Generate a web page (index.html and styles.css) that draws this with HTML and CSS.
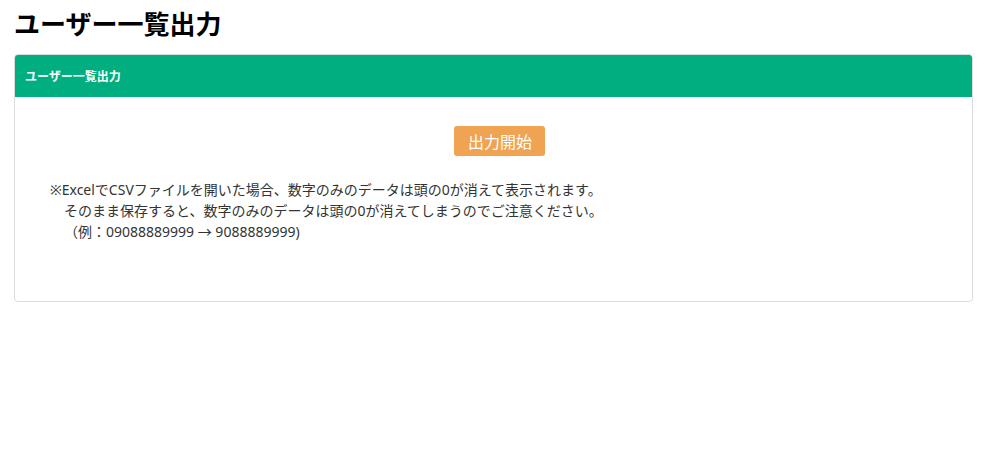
FILE: index.html
```html
<!DOCTYPE html>
<html lang="ja">
<head>
<meta charset="utf-8">
<link rel="stylesheet" href="styles.css">
</head>
<body>
<h1 class="page-title">ユーザー一覧出力</h1>
<div class="card">
  <div class="card-header">ユーザー一覧出力</div>
  <div class="card-body">
    <div class="actions"><button class="btn-export">出力開始</button></div>
    <p class="note">※ExcelでCSVファイルを開いた場合、数字のみのデータは頭の0が消えて表示されます。<br>　そのまま保存すると、数字のみのデータは頭の0が消えてしまうのでご注意ください。<br>　（例：09088889999 → 9088889999)</p>
  </div>
</div>
</body>
</html>
```
FILE: styles.css
```css
html, body { margin: 0; padding: 0; background: #fff; }
body {
  font-family: "Noto Sans", "Noto Sans CJK JP", sans-serif;
  color: #333;
  padding: 4px 13px 0 14px;
  text-spacing-trim: space-all;
}
.page-title {
  margin: 0 0 12px 0;
  font-family: "Noto Sans CJK JP", sans-serif;
  font-size: 26px;
  line-height: 38px;
  font-weight: 700;
  color: #000;
}
.card {
  border: 1px solid #dcdcdc;
  border-radius: 4px;
  overflow: hidden;
}
.card-header {
  background: #00ae80;
  color: #fff;
  font-family: "Noto Sans CJK JP", sans-serif;
  font-size: 12px;
  font-weight: 700;
  height: 42px;
  line-height: 42px;
  padding: 0 10px;
}
.card-body {
  padding: 29px 23px 59px 35px;
}
.actions { display: flex; justify-content: center; }
.btn-export {
  font-family: "Noto Sans CJK JP", sans-serif;
  background: #f0a353;
  color: #fff;
  border: none;
  border-radius: 3px;
  font-size: 16px;
  height: 30px;
  padding: 0 13px 0 14px;
  line-height: 30px;
}
.note {
  margin: 23px 0 0 0;
  font-size: 14px;
  line-height: 21px;
  color: #333;
}
```
